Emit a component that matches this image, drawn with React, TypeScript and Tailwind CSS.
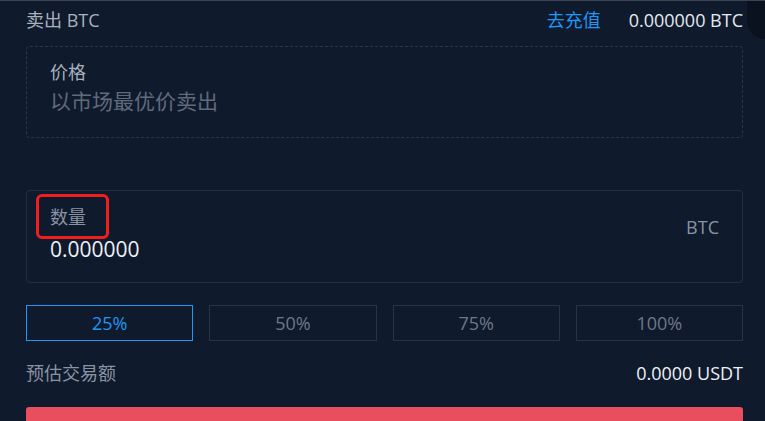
import { useState } from "react";

const PCTS = ["25%", "50%", "75%", "100%"];

export default function App() {
  const [pct, setPct] = useState("25%");

  return (
    <div
      className="relative w-[765px] h-[421px] overflow-hidden bg-[#0f1a2d] border-t border-[#3c4456]"
      style={{ fontFamily: '"Open Sans", "Noto Sans CJK SC", sans-serif' }}
    >
      {/* corner of the outer frame */}
      <div className="absolute right-0 top-0 w-[18px] h-[38px] bg-[#0a121f] rounded-bl-[18px]" />

      <div className="flex flex-col px-[26px] pr-[22px]">
        {/* header */}
        <div className="flex items-center justify-between h-[40px] pb-[2px]">
          <span className="text-[18px] text-[#a9b1be]">卖出 BTC</span>
          <div className="flex items-center gap-[28px] text-[18px]">
            <span className="text-[#2196f3]">去充值</span>
            <span className="text-[#e6e9ee]">0.000000 BTC</span>
          </div>
        </div>

        {/* price */}
        <div className="h-[92px] mt-[5px] rounded border border-dashed border-[#2a3549] px-[23px] pt-[13px]">
          <div className="text-[18px] text-[#a9b1be] leading-[24px]">价格</div>
          <div className="text-[21px] text-[#5f6a7c] leading-[32px] mt-[1px]">以市场最优价卖出</div>
        </div>

        {/* amount */}
        <div className="relative h-[93px] mt-[52px] rounded border border-[#243046] flex items-center justify-between pl-[23px] pr-[23px]">
          <div className="flex flex-col -mt-[5px]">
            <span className="text-[18px] text-[#8a93a3] leading-[24px]">数量</span>
            <span className="text-[21px] text-[#eef1f5] leading-[30px] mt-[5px]">0.000000</span>
          </div>
          <span className="text-[18px] text-[#8a93a3] -mt-[18px]">BTC</span>
          <div className="absolute left-[9px] top-[3px] w-[73px] h-[45px] rounded-[6px] border-[3px] border-[#f21d1d]" />
        </div>

        {/* percent buttons */}
        <div className="grid grid-cols-4 gap-[16px] mt-[22px]">
          {PCTS.map((p) => (
            <button
              key={p}
              onClick={() => setPct(p)}
              className={`h-[36px] border text-[18px] ${
                pct === p ? "border-[#2196f3] text-[#2196f3]" : "border-[#283347] text-[#6e7888]"
              }`}
            >
              {p}
            </button>
          ))}
        </div>

        {/* estimate */}
        <div className="flex items-center justify-between h-[26px] mt-[19px]">
          <span className="text-[18px] text-[#8a93a3]">预估交易额</span>
          <span className="text-[18px] text-[#eef1f5]">0.0000 USDT</span>
        </div>

        <div className="h-[40px] mt-[21px] rounded-t-[3px] bg-[#e84e5d]" />
      </div>
    </div>
  );
}
